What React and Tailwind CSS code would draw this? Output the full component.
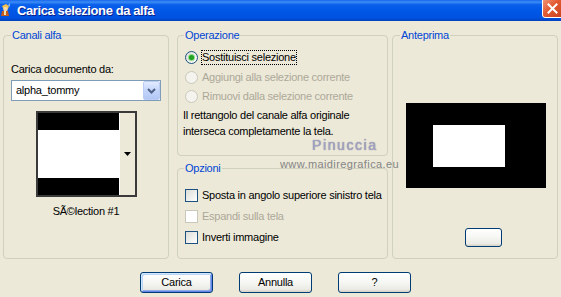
import React from 'react';

// --- SHARED STYLES ---
const BUTTON_BG = 'bg-[linear-gradient(to_bottom,#FFFFFF_0%,#F7F7F4_45%,#ECEBE6_85%,#D6D0C5_100%)]';

// --- HELPER COMPONENTS ---
const Group = ({ title, className = '', labelClass = '', children }) => (
    <div className={`border border-[#D0D0BF] rounded-[4px] ${className}`}>
        <div className={`-mt-[7px] w-fit px-[1px] bg-[#ECE9D8] text-[#0046D5] leading-[13px] ${labelClass}`}>{title}</div>
        {children}
    </div>
);

const Radio = ({ label, checked = false, disabled = false, focused = false }) => (
    <div className="flex items-center h-[15px]">
        <span className={`w-[13px] h-[13px] shrink-0 rounded-full border flex items-center justify-center ${disabled ? 'border-[#CAC8BB] bg-[#F4F3EE]' : 'border-[#1C5180] bg-[linear-gradient(135deg,#DCDCD7,#FFFFFF)]'}`}>
            {checked && <span className="w-[5px] h-[5px] rounded-full bg-[#21A121] shadow-[0_0_0_1px_#8EDB8E]" />}
        </span>
        <span className={`ml-[3px] h-[15px] border border-dotted leading-[13px] whitespace-nowrap ${focused ? 'border-black' : 'border-transparent'} ${disabled ? 'text-[#ACA899]' : ''}`}>{label}</span>
    </div>
);

const Check = ({ label, disabled = false }) => (
    <div className="flex items-center h-[13px]">
        <span className={`w-[13px] h-[13px] shrink-0 border ${disabled ? 'border-[#CAC8BB] bg-white' : 'border-[#1C5180] bg-[linear-gradient(135deg,#DCDCD7,#FFFFFF)]'}`} />
        <span className={`ml-[4px] leading-[13px] whitespace-nowrap ${disabled ? 'text-[#ACA899]' : ''}`}>{label}</span>
    </div>
);

const XpButton = ({ children, isDefault = false }) => (
    <button className={`w-[73px] h-[21px] border border-[#003C74] rounded-[3px] text-black leading-[13px] ${BUTTON_BG} ${isDefault ? 'shadow-[inset_1px_1px_0_#CEE7FF,inset_-1px_-1px_0_#6982EE,inset_2px_2px_0_#BCD4F6,inset_-2px_-2px_0_#89ADE4]' : ''}`}>
        {children}
    </button>
);

const TitleIcon = () => (
    <svg width="11" height="15" viewBox="0 0 11 15" className="shrink-0">
        <path d="M2 3 L6 1 L9 3 L8 6 L4 7 Z" fill="#F3C14B" />
        <circle cx="5.5" cy="6" r="2.3" fill="#F6D7A8" />
        <path d="M2 8 L8 8 L9 13 L1 13 Z" fill="#C45A1E" />
        <path d="M4 8 L6 8 L6 12 L4 12 Z" fill="#F2E3B0" />
        <path d="M8 2 L10 0 L10 4 Z" fill="#7FB3F4" />
    </svg>
);

const TitleBar = () => (
    <div className="h-[21px] flex items-center bg-[linear-gradient(to_bottom,#1766EC_0%,#3C8DF6_10%,#0A60EB_22%,#0056E6_55%,#0052E0_85%,#0042BE_100%)]">
        <TitleIcon />
        <span className="ml-[6px] text-white font-bold text-[13px] tracking-[-0.4px] leading-[16px] [text-shadow:1px_1px_0_#0A1E8C]">Carica selezione da alfa</span>
        <div className="ml-auto -mr-[3px] self-start -mt-[3px] w-[22px] h-[21px] rounded-[3px] border border-white bg-[linear-gradient(135deg,#F29A7E_0%,#E25A32_45%,#C8421E_100%)] flex items-center justify-center">
            <svg width="11" height="11" viewBox="0 0 11 11" className="mt-[2px] -ml-[1px]">
                <path d="M1.5 1.5 L9.5 9.5 M9.5 1.5 L1.5 9.5" stroke="#FFFFFF" strokeWidth="2" strokeLinecap="square" />
            </svg>
        </div>
    </div>
);

// --- MAIN APP COMPONENT ---
export default function App() {
    return (
        <div className="relative w-[561px] h-[297px] overflow-hidden bg-[#ECE9D8] text-black text-[11px] tracking-[-0.25px] font-['Liberation_Sans',Arial,sans-serif]">
            <TitleBar />

            <div className="flex pl-[3px] pt-[14px]">
                {/* Canali alfa */}
                <Group title="Canali alfa" className="w-[166px] h-[224px]" labelClass="ml-[7px]">
                    <div className="pl-[7px]">
                        <div className="mt-[21px] leading-[13px]">Carica documento da:</div>
                        <div className="mt-[4px] w-[150px] h-[21px] border border-[#7F9DB9] bg-white flex items-center">
                            <span className="flex-1 pl-[4px] leading-[13px]">alpha_tommy</span>
                            <span className="w-[17px] h-[19px] rounded-[2px] border border-[#BBCCF5] bg-[linear-gradient(to_bottom,#E2EBFE_0%,#C4D5FB_50%,#B2C7F6_100%)] flex items-center justify-center">
                                <svg width="9" height="6" viewBox="0 0 9 6">
                                    <path d="M1 1 L4.5 4.5 L8 1" stroke="#4D6185" strokeWidth="2" fill="none" />
                                </svg>
                            </span>
                        </div>
                        <div className="mt-[10px] ml-[25px] w-[101px] h-[86px] border-2 border-[#3A3A3A] flex">
                            <div className="w-[81px] flex flex-col">
                                <div className="h-[17px] bg-black" />
                                <div className="flex-1 bg-white" />
                                <div className="h-[17px] bg-black" />
                            </div>
                            <div className="flex-1 border-l border-white bg-[#ECE9D8] flex items-center justify-center">
                                <svg width="7" height="4" viewBox="0 0 7 4">
                                    <path d="M0 0 L7 0 L3.5 4 Z" fill="#000000" />
                                </svg>
                            </div>
                        </div>
                    </div>
                    <div className="mt-[8px] text-center leading-[13px]">SÃ©lection #1</div>
                </Group>

                {/* Operazione + Opzioni */}
                <div className="ml-[8px] w-[211px] flex flex-col">
                    <Group title="Operazione" className="h-[121px]" labelClass="ml-[6px]">
                        <div className="pl-[7px] pt-[8px]">
                            <Radio checked focused label="Sostituisci selezione" />
                            <div className="mt-[5px]"><Radio disabled label="Aggiungi alla selezione corrente" /></div>
                            <div className="mt-[4px]"><Radio disabled label="Rimuovi dalla selezione corrente" /></div>
                            <p className="mt-[3px] -ml-[2px] leading-[16px]">
                                Il rettangolo del canale alfa originale<br />interseca completamente la tela.
                            </p>
                        </div>
                    </Group>
                    <Group title="Opzioni" className="mt-[12px] h-[91px]" labelClass="ml-[6px]">
                        <div className="pl-[7px] pt-[14px] flex flex-col gap-[8px]">
                            <Check label="Sposta in angolo superiore sinistro tela" />
                            <Check disabled label="Espandi sulla tela" />
                            <Check label="Inverti immagine" />
                        </div>
                    </Group>
                </div>

                {/* Anteprima */}
                <Group title="Anteprima" className="ml-[4px] w-[166px] h-[224px]" labelClass="ml-[7px]">
                    <div className="mt-[61px] ml-[13px] w-[140px] h-[85px] bg-black pt-[22px] pl-[27px]">
                        <div className="w-[72px] h-[42px] bg-white" />
                    </div>
                    <button className={`block mt-[40px] ml-[72px] w-[37px] h-[19px] border border-[#003C74] rounded-[3px] ${BUTTON_BG}`} />
                </Group>
            </div>

            <div className="flex mt-[13px] pl-[140px] gap-[26px]">
                <XpButton isDefault>Carica</XpButton>
                <XpButton>Annulla</XpButton>
                <XpButton>?</XpButton>
            </div>

            {/* watermark over the dialog */}
            <div className="absolute left-[312px] top-[137px] text-[14px] leading-[16px] tracking-[1.6px] text-[#A4A4C4] [text-shadow:0_0_1px_#6E6E8E] pointer-events-none">Pinuccia</div>
            <div className="absolute left-[280px] top-[158px] text-[11px] leading-[13px] tracking-[0.4px] text-[#858585] pointer-events-none">www.maidiregrafica.eu</div>
        </div>
    );
}
